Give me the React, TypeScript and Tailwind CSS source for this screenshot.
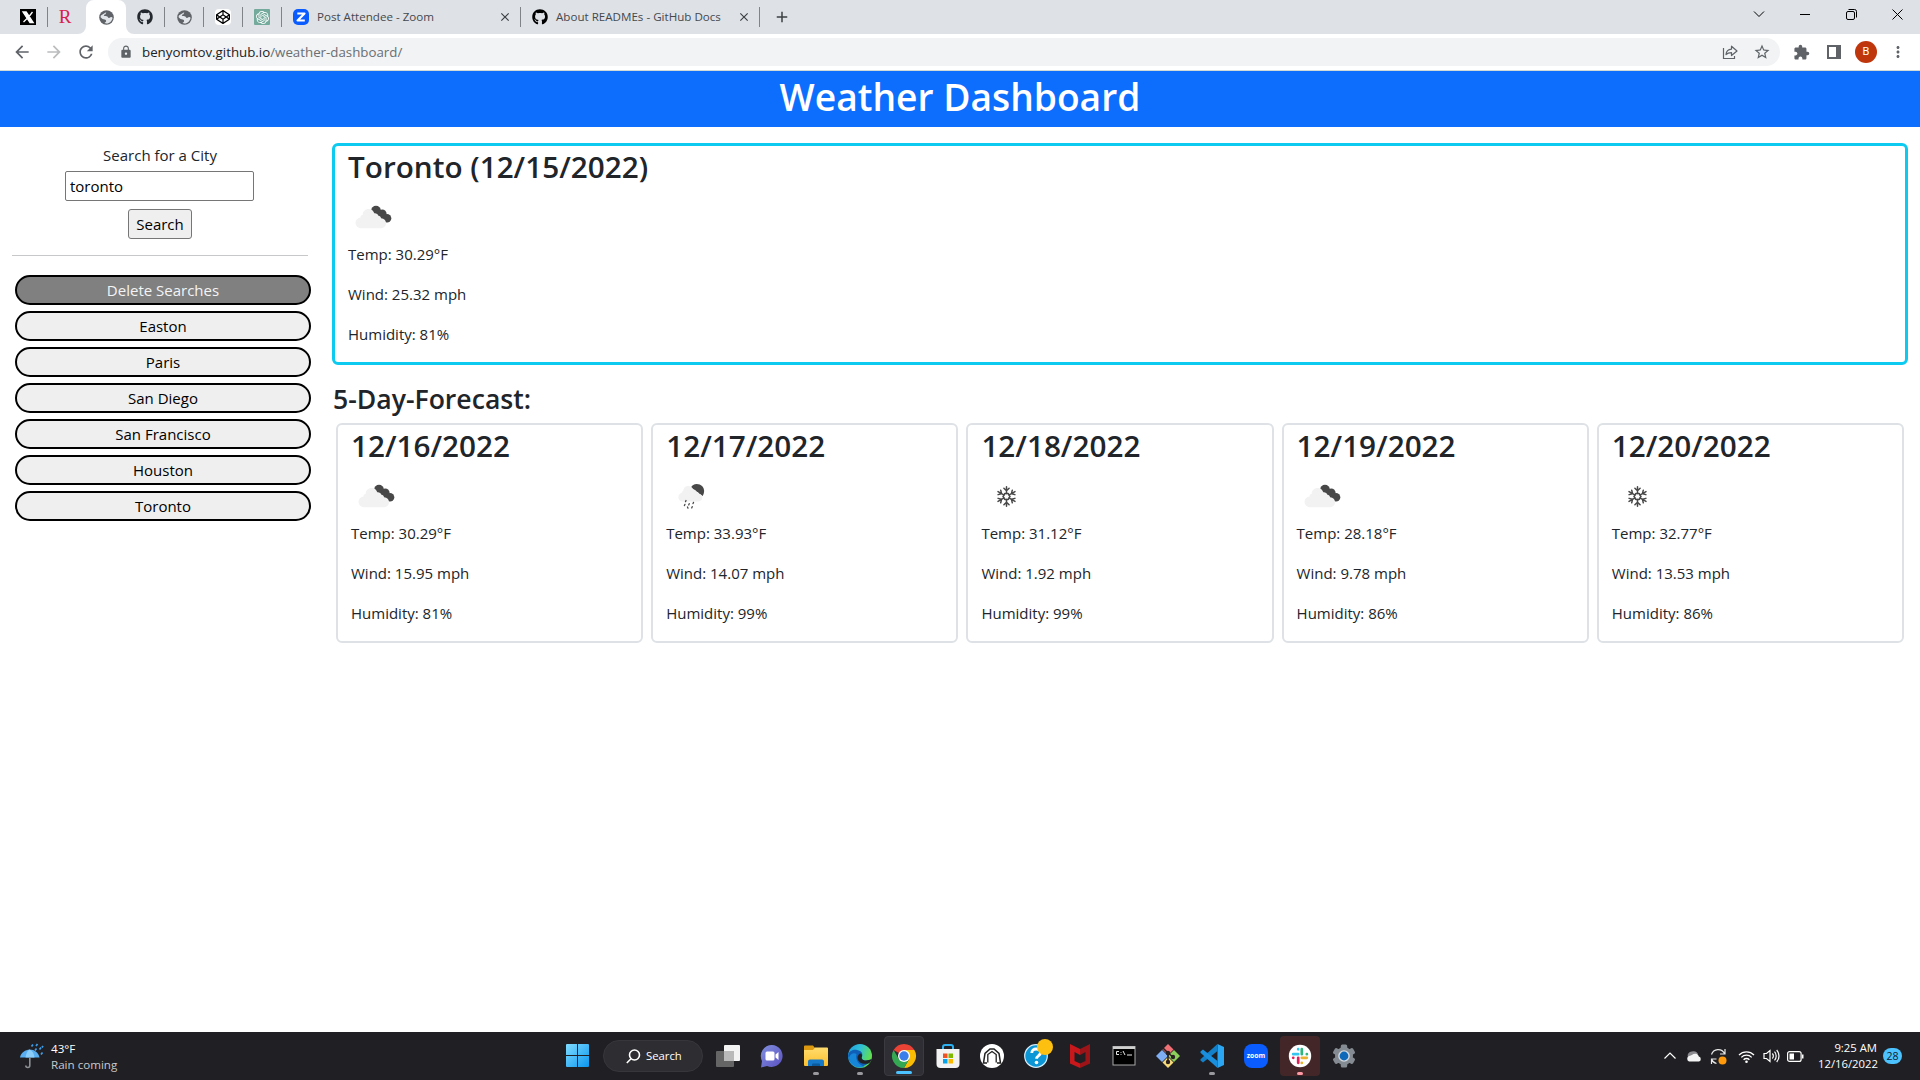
import React from "react";
import { FaGithub, FaCodepen } from "react-icons/fa";
import { SiOpenai } from "react-icons/si";
import {
  MdArrowBack,
  MdArrowForward,
  MdRefresh,
  MdLock,
  MdStarBorder,
  MdExtension,
  MdMoreVert,
  MdClose,
  MdAdd,
} from "react-icons/md";

type WeatherKind = "clouds" | "rain" | "snow";

interface Day {
  title: string;
  kind: WeatherKind;
  temp: string;
  wind: string;
  humidity: string;
}

const today: Day = {
  title: "Toronto (12/15/2022)",
  kind: "clouds",
  temp: "30.29",
  wind: "25.32",
  humidity: "81",
};

const forecast: Day[] = [
  { title: "12/16/2022", kind: "clouds", temp: "30.29", wind: "15.95", humidity: "81" },
  { title: "12/17/2022", kind: "rain", temp: "33.93", wind: "14.07", humidity: "99" },
  { title: "12/18/2022", kind: "snow", temp: "31.12", wind: "1.92", humidity: "99" },
  { title: "12/19/2022", kind: "clouds", temp: "28.18", wind: "9.78", humidity: "86" },
  { title: "12/20/2022", kind: "snow", temp: "32.77", wind: "13.53", humidity: "86" },
];

const cities = ["Easton", "Paris", "San Diego", "San Francisco", "Houston", "Toronto"];

function WeatherIcon({ kind }: { kind: WeatherKind }) {
  return (
    <svg className="-ml-px block size-[50px]" viewBox="0 0 50 50">
      {kind === "clouds" && (
        <>
          <g fill="#484848">
            <circle cx="29" cy="18.700" r="4.900" />
            <circle cx="35.300" cy="21.800" r="4.300" />
            <circle cx="40" cy="26.300" r="4.300" />
            <path d="M28 21l10-1 3 9-4 1-8-5z" />
          </g>
          <path
            d="M14 36.2a5.3 5.3 0 0 1-.4-10.6 2 2 0 0 1 2-2.6c.2-3.500 2.600-6 5.900-6 2.800 0 4.900 1.600 5.800 4.200 1.700-.3 3.700.8 4.100 2.600 1.500.1 2.400 1 2.700 2.500 3 .1 4.900 2.300 4.900 5 0 2.900-2 4.900-4.900 4.900z"
            fill="#f2f2f2"
          />
        </>
      )}
      {kind === "rain" && (
        <>
          <path d="M26 16.500c1-2.300 3-3.600 5.700-3.600 4.300 0 7.400 3 7.400 7.200 0 1.600-.5 3.300-1.500 4.800z" fill="#484848" />
          <path
            d="M17 30.500a4.400 4.400 0 0 1-.3-8.600c0-1 .6-1.700 1.400-1.900.2-3.100 2.400-5 5-5 2.500 0 4.300 1.400 5 3.500 1.600-.2 3 .8 3.400 2.300 1.500.1 2.300 1 2.500 2.300 2 .2 3.300 1.600 3.300 3.500 0 2.300-1.600 3.900-3.700 3.900z"
            fill="#f2f2f2"
          />
          <path
            d="M21 29.500l-.5 1.200M19.900 33.400l-.5 1.200M24.200 32.700l-.5 1.200M22.500 36l.5 1.200M28.500 31.400l-.5 1.200M27.200 35.700l-.5 1.200"
            stroke="#484848"
            strokeWidth="1.300"
            strokeLinecap="round"
          />
        </>
      )}
      {kind === "snow" && (
        <g stroke="#484848" strokeWidth="1.500" fill="none" strokeLinecap="round">
          {[0, 60, 120, 180, 240, 300].map((a) => (
            <path key={a} transform={`rotate(${a} 26.500 25.500)`} d="M26.500 22.800v-7.100M23.900 17.300l2.600 2.500 2.600-2.500M24.900 22.600h3.200" />
          ))}
        </g>
      )}
    </svg>
  );
}

function DayDetails({ day }: { day: Day }) {
  return (
    <>
      <h2 className="mb-1.5 h-[40.4px] text-[29.7px] leading-[42px] font-semibold whitespace-nowrap">{day.title}</h2>
      <WeatherIcon kind={day.kind} />
      <p className="mb-4">Temp: {day.temp}°F</p>
      <p className="mb-4">Wind: {day.wind} mph</p>
      <p className="mb-4">Humidity: {day.humidity}%</p>
    </>
  );
}

function Globe() {
  return (
    <svg className="size-[15px]" viewBox="0 0 15 15">
      <circle cx="7.500" cy="7.500" r="7.300" fill="#5f6368" />
      <path d="M8.300 1.600c-1.300.6-1.500 1.200-1.500 2.100 0 .8-1.900.5-2 1.600 0 1 1.600.8 2.800.9 1.500.1 1.200 1.700 2.400 1.700 1 0 1.100-1 2-1 .7 0 1 .5 1.600.5C13.400 10.700 10.700 13.400 7.500 13.400c-.9 0-1.400-.2-1.900-.5.4-.7 1.400-.8 1.500-1.700.1-1-.5-1.600-1.500-1.700-1.400-.1-2.600-.7-4-2.300 0-.6.100-1.200.3-1.700" fill="#e3e6ea" />
    </svg>
  );
}

function SmallTab({ children, divider = true }: { children: React.ReactNode; divider?: boolean }) {
  return (
    <div className="flex h-[34px] w-[39px] items-center">
      <div className="flex flex-1 justify-center">{children}</div>
      <div className={divider ? "h-5 w-px bg-[#808388]" : "h-5 w-px"} />
    </div>
  );
}

function WideTab({ icon, label }: { icon: React.ReactNode; label: string }) {
  return (
    <div className="flex h-[34px] w-[239px] items-center">
      <div className="ml-[10.5px] flex w-[17px] justify-center">{icon}</div>
      <span className="ml-[7.5px] flex-1 text-[11.6px] whitespace-nowrap text-[#45494d]">{label}</span>
      <MdClose className="mr-2 size-[14px] text-[#3c4043]" />
      <div className="h-5 w-px bg-[#808388]" />
    </div>
  );
}

function TabStrip() {
  return (
    <div className="flex h-[34px] bg-[#dee1e6] pl-[9px]">
      <SmallTab>
        <svg className="size-4" viewBox="0 0 16 16">
          <rect width="16" height="16" fill="#000" />
          <path d="M3 3h3.200l7 10.500H10zM12.500 3L9 7.500M7 9.500L3.500 13" fill="#fff" stroke="#fff" strokeWidth="1.300" />
        </svg>
      </SmallTab>
      <SmallTab divider={false}>
        <span className="-ml-1 font-['Liberation_Serif'] text-[19px] leading-4 text-[#d8204f]">R</span>
      </SmallTab>
      <div className="relative flex h-[34px] w-[39px] items-center justify-center">
        <svg className="absolute top-0 -left-[9px] h-[34px] w-14" viewBox="0 0 56 34">
          <path d="M0 34a8 8 0 0 0 8-8V8a8 8 0 0 1 8-8h24a8 8 0 0 1 8 8v18a8 8 0 0 0 8 8z" fill="#fff" />
        </svg>
        <div className="relative mr-px">
          <Globe />
        </div>
      </div>
      <SmallTab>
        <FaGithub className="size-4 text-[#24292f]" />
      </SmallTab>
      <SmallTab>
        <Globe />
      </SmallTab>
      <SmallTab>
        <div className="flex size-4 items-center justify-center rounded-sm bg-white">
          <FaCodepen className="size-[14px] text-black" />
        </div>
      </SmallTab>
      <SmallTab>
        <div className="flex size-4 items-center justify-center rounded-[1px] bg-[#74aa9c]">
          <SiOpenai className="size-[13px] text-white" />
        </div>
      </SmallTab>
      <WideTab
        label="Post Attendee - Zoom"
        icon={
          <svg className="size-4" viewBox="0 0 16 16">
            <rect width="16" height="16" rx="5" fill="#0b5cff" />
            <path d="M4.300 4.500h7.200L4.600 11.500h7.200" fill="none" stroke="#fff" strokeWidth="2.200" strokeLinejoin="round" />
          </svg>
        }
      />
      <WideTab label="About READMEs - GitHub Docs" icon={<FaGithub className="size-4 text-black" />} />
      <div className="flex w-[44px] items-center justify-center">
        <MdAdd className="size-[18px] text-[#3c4043]" />
      </div>
      <div className="ml-auto flex h-7 text-black">
        <div className="flex w-[46px] items-center justify-center">
          <svg className="size-3" viewBox="0 0 12 12" fill="none" stroke="currentColor">
            <path d="M1 3.500l5 5 5-5" />
          </svg>
        </div>
        <div className="flex w-[46px] items-center justify-center">
          <div className="h-px w-[10px] bg-black" />
        </div>
        <div className="flex w-[46px] items-center justify-center">
          <svg className="size-[11px]" viewBox="0 0 11 11" fill="none" stroke="currentColor">
            <rect x=".5" y="2.500" width="8" height="8" rx="1.500" />
            <path d="M2.500.5h6a2 2 0 0 1 2 2v6" />
          </svg>
        </div>
        <div className="flex w-[46px] items-center justify-center">
          <svg className="size-[11px]" viewBox="0 0 11 11" stroke="currentColor">
            <path d="M.5.5l10 10M10.500.5l-10 10" />
          </svg>
        </div>
      </div>
    </div>
  );
}

function Toolbar() {
  return (
    <div className="flex h-[37px] items-center border-b border-[#d3dbd8] bg-white text-[#5f6368]">
      <div className="flex h-9 w-[108px] items-center pl-3">
        <MdArrowBack className="size-5" />
        <MdArrowForward className="ml-3 size-5 text-[#babcbe]" />
        <MdRefresh className="ml-3 size-5" />
      </div>
      <div className="flex h-7 w-[1672px] items-center rounded-full bg-[#f1f3f4]">
        <MdLock className="ml-[11px] size-[14px]" />
        <span className="ml-[9px] flex-1 text-[13.3px] whitespace-nowrap text-[#6a6e73]">
          <span className="text-[#202124]">benyomtov.github.io</span>/weather-dashboard/
        </span>
        <svg className="size-4" viewBox="0 0 16 16" fill="none" stroke="currentColor" strokeWidth="1.200">
          <path d="M1.500 4v10.500h11V12" />
          <path d="M4 10.500c.3-3.500 2.300-5.200 5.500-5.400V2.200L15 7l-5.500 4.500V8.700C7 8.700 5.300 9.200 4 10.500z" strokeLinejoin="round" />
        </svg>
        <MdStarBorder className="mr-[9px] ml-[15px] size-[18px]" />
      </div>
      <div className="flex flex-1 items-center pl-[13px]">
        <MdExtension className="size-[17px]" />
        <svg className="ml-[17px] size-[14px]" viewBox="0 0 14 14">
          <path d="M0 0h14v14H0zM2 2v10h7V2z" fill="currentColor" fillRule="evenodd" />
        </svg>
        <div className="ml-[14px] flex size-[22px] items-center justify-center rounded-full bg-[#bf360c] font-['Roboto'] text-[11px] text-white">
          B
        </div>
        <MdMoreVert className="ml-3 size-[18px]" />
      </div>
    </div>
  );
}

function Sidebar() {
  return (
    <aside className="w-[332px] shrink-0">
      <div className="ml-3 flex w-[296px] flex-col items-center">
        <label htmlFor="city" className="mt-4">
          Search for a City
        </label>
        <input
          id="city"
          defaultValue="toronto"
          className="mt-[4px] -ml-px h-[30px] w-[189px] rounded-[2px] border border-[#767676] bg-white px-1 text-black outline-none"
        />
        <button className="mt-2 h-[30px] w-16 rounded-[3px] border border-[#767676] bg-[#efefef] text-black">Search</button>
        <div className="mt-4 h-px w-full bg-[#c7c8c9]" />
      </div>
      <div className="mt-[19px] ml-[15px] flex w-[296px] flex-col gap-1.5 text-black">
        <button className="h-[30px] rounded-full border-2 border-black bg-[#808080] leading-[26px] text-[#f4f4f4]">Delete Searches</button>
        {cities.map((c) => (
          <button key={c} className="h-[30px] rounded-full border-2 border-black bg-[#efefef] leading-[26px]">
            {c}
          </button>
        ))}
      </div>
    </aside>
  );
}

const taskIcons: { id: string; mark?: string; tile?: string; art: React.ReactNode }[] = [
  {
    id: "task-view",
    art: (
      <>
        <rect x="8" y="1" width="16" height="16" rx="1" fill="#f3f3f3" />
        <rect x="0" y="7" width="18" height="16" rx="1" fill="#777" fillOpacity=".8" />
        <path d="M8 7h10v10H8z" fill="#b9b9b9" />
      </>
    ),
  },
  {
    id: "chat",
    art: (
      <>
        <path d="M12 1a11 11 0 1 1-5 21L1 23.500 2 17A11 11 0 0 1 12 1z" fill="url(#chat)" />
        <rect x="5.500" y="7.500" width="9" height="9" rx="1.500" fill="#fff" />
        <path d="M15.500 10.500l3-2.500v8l-3-2.500z" fill="#fff" />
      </>
    ),
  },
  {
    id: "explorer",
    mark: "w-1.5 bg-[#9a9a9e]",
    art: (
      <>
        <path d="M0 2.500a1 1 0 0 1 1-1h8l2 2.500v5H0z" fill="#dd9a10" />
        <path d="M0 6h9l2-2.500h12a1 1 0 0 1 1 1V21a1 1 0 0 1-1 1H1a1 1 0 0 1-1-1z" fill="url(#folder)" />
        <path d="M4 22v-4.500a2 2 0 0 1 2-2h12a2 2 0 0 1 2 2V22z" fill="#1578c8" />
        <path d="M8 22v-1.500a1 1 0 0 1 1-1h6a1 1 0 0 1 1 1V22z" fill="#0b5a9c" />
      </>
    ),
  },
  {
    id: "edge",
    mark: "w-1.5 bg-[#9a9a9e]",
    art: (
      <>
        <circle cx="12" cy="12" r="12" fill="url(#edge)" />
        <path d="M0 12C1 6 6 5.500 9 6c5 .8 6 4 5 6.500-1 1.500 0 4 4 4 2 0 4-.6 5-1.200A12 12 0 0 1 0 12z" fill="#0f5fb8" />
        <path d="M8.500 10C7 15 10 21 16.500 22.500 9 26 1 20 1 13.500 3 9 6 8.500 8.500 10z" fill="#1686d9" />
        <path d="M14 12.500c-1 1.500 0 4 4 4 2 0 4-.6 5-1.200l1 .2-2.500 3.500c-5 2-11.500.5-12-5 0-2 1-3.500 2.500-4.500 1.500 0 2.500 1.500 2 3z" fill="#202127" />
      </>
    ),
  },
  {
    id: "chrome",
    mark: "w-4 bg-[#4cc2ff]",
    tile: "bg-[#2e2e34] border border-[#3a3a40]",
    art: (
      <>
        <path d="M12 12L1.600 6A12 12 0 0 1 22.400 6z" fill="#ea4335" />
        <path d="M12 12V6h10.400A12 12 0 0 1 12 24l5.200-9z" fill="#fbbc04" />
        <path d="M12 12l5.200 3L12 24A12 12 0 0 1 1.600 6l5.200 9z" fill="#34a853" />
        <circle cx="12" cy="12" r="6" fill="#fff" />
        <circle cx="12" cy="12" r="4.700" fill="#3b7de9" />
      </>
    ),
  },
  {
    id: "store",
    art: (
      <>
        <path d="M7 6V3a2 2 0 0 1 2-2h6a2 2 0 0 1 2 2v3" fill="none" stroke="#2db1f0" strokeWidth="2" />
        <path d="M.5 5h23v15a4 4 0 0 1-4 4h-15a4 4 0 0 1-4-4z" fill="#f3f3f3" />
        <path d="M7 9.500h4.500V14H7z" fill="#f05125" />
        <path d="M12.500 9.500H17V14h-4.500z" fill="#7eb900" />
        <path d="M7 15h4.500v4.500H7z" fill="#05a4ef" />
        <path d="M12.500 15H17v4.500h-4.500z" fill="#fdb900" />
      </>
    ),
  },
  {
    id: "predator",
    art: (
      <>
        <circle cx="12" cy="12" r="12" fill="#fff" />
        <path d="M7 19H3.500l1.500-9.500L10 5h4l5 4.500L20.500 19H17" fill="none" stroke="#222" strokeWidth="1.500" />
        <path d="M7.800 18.500V10.500L12 7.500l4.200 3v8" fill="none" stroke="#222" strokeWidth="1.300" />
      </>
    ),
  },
  {
    id: "help",
    art: (
      <>
        <circle cx="12" cy="12" r="11.300" fill="#0c96d6" stroke="#d6eefa" strokeWidth="1.200" />
        <path d="M7.800 9c0-2.600 1.800-4 4.400-4s4.400 1.500 4.400 3.600c0 3-4 3-4 6.200" fill="none" stroke="#fff" strokeWidth="2.800" />
        <circle cx="12.500" cy="18.500" r="1.800" fill="#fff" />
        <circle cx="21" cy="3" r="8" fill="#fdc010" />
      </>
    ),
  },
  {
    id: "shield",
    art: (
      <>
        <path d="M2 0l10 5v6L6.500 8v9l5.500 2.500V24L2 19.500z" fill="#c8181c" />
        <path d="M22 0L12 5v6l5.500-3v9L12 19.500V24l10-4.500z" fill="#9c1418" />
      </>
    ),
  },
  {
    id: "terminal",
    art: (
      <>
        <rect x="1" y="2.500" width="22" height="18.500" fill="#000" stroke="#a8a8a8" />
        <path d="M1 2.500h22V5H1z" fill="#d0d0d0" />
        <path d="M7 7.500H4.500v3H7M9 8v.8M9 10v.8M11 7l2 4M15 11h5" fill="none" stroke="#e8e8e8" />
      </>
    ),
  },
  {
    id: "git",
    art: (
      <>
        <path d="M12 0l5.500 5.500L12 11 6.500 5.500z" fill="#f07075" />
        <path d="M6 6l6 6-6 6-6-6z" fill="#80aef5" />
        <path d="M18 6l6 6-6 6-6-6z" fill="#8ccf5b" />
        <path d="M12 13l5.500 5.500L12 24l-5.500-5.500z" fill="#f8dc78" />
        <path d="M7 4l5 5v10M12 9l5 4" fill="none" stroke="#2b2020" strokeWidth="1.600" />
        <circle cx="12" cy="9" r="2.200" fill="#2b2020" />
        <circle cx="12" cy="18" r="2.200" fill="#2b2020" />
        <circle cx="17" cy="13" r="2.200" fill="#2b2020" />
      </>
    ),
  },
  {
    id: "code",
    mark: "w-1.5 bg-[#9a9a9e]",
    art: (
      <>
        <path d="M17.500 0L24 3v18l-6.500 3z" fill="#2aa6f2" />
        <path d="M17.500 0v7L3 18.500.5 16.500v-1.300z" fill="#1380c9" />
        <path d="M17.500 24v-7L3 5.500.5 7.500v1.300z" fill="#1a8fdd" />
      </>
    ),
  },
  {
    id: "zoom",
    art: (
      <>
        <rect width="24" height="24" rx="8" fill="#0b5cff" />
        <text x="12" y="14" textAnchor="middle" fontSize="6.800" fontWeight="700" fill="#fff">
          zoom
        </text>
      </>
    ),
  },
  {
    id: "slack",
    mark: "w-1.5 bg-[#ff99a4]",
    tile: "bg-[#432728]",
    art: (
      <>
        <circle cx="12" cy="12" r="11.200" fill="#fff" />
        <g strokeWidth="2.700" strokeLinecap="round">
          <path d="M10.200 5.200v.1M5.200 10.200h5" stroke="#36c5f0" />
          <path d="M13.800 5.200v5M18.800 10.200h.1" stroke="#2eb67d" />
          <path d="M13.800 13.800h5M13.800 18.800v.1" stroke="#ecb22e" />
          <path d="M10.200 13.800v5M5.200 13.800h.1" stroke="#e01e5a" />
        </g>
      </>
    ),
  },
  {
    id: "settings",
    art: (
      <>
        <g fill="#858b92">
          <circle cx="12" cy="12" r="9" />
          {[0, 60, 120].map((a) => (
            <rect key={a} x="8.800" y=".5" width="6.400" height="23" rx="1.500" transform={`rotate(${a} 12 12)`} />
          ))}
        </g>
        <circle cx="12" cy="12" r="5.800" fill="#d5dade" />
        <circle cx="12" cy="12" r="4.400" fill="#0f68b8" />
      </>
    ),
  },
];

function Taskbar() {
  return (
    <footer className="flex h-12 items-center bg-[#202024] text-white">
      <div className="flex w-[566px] items-center pl-[19px]">
        <svg className="size-[26px]" viewBox="0 0 26 26">
          <path d="M1 14.500C2 9 6.500 7 10.500 6.500c5 0 9 3 10 8z" fill="#58aef0" />
          <path d="M6.500 14.500c.5-4 2-6.500 4-8 3 1.500 4.500 4 5 8z" fill="#8accfa" />
          <path d="M10.800 14v8.500a2 2 0 0 1-4 0" fill="none" stroke="#8d8f94" strokeWidth="1.600" />
          <path d="M14 1.500l-1.500 2M18.500 1l-1.500 2M17.500 5.500l-1.500 2M22 4.500l-1.500 2M23.500 9.500l-1.500 2M24 3l-1 1.500" stroke="#3f9de8" strokeWidth="1.700" />
        </svg>
        <div className="ml-[6px] pt-[2px] text-[11.6px] leading-4">
          <div>43°F</div>
          <div className="text-[#c8c8ca]">Rain coming</div>
        </div>
      </div>
      <svg className="size-6" viewBox="0 0 24 24">
        <path d="M0 1a1 1 0 0 1 1-1h10v11H0zM12 0h10a1 1 0 0 1 1 1v10H12zM0 12h11v11H1a1 1 0 0 1-1-1zM12 12h11v10a1 1 0 0 1-1 1H12z" fill="url(#win)" />
        <defs>
          <linearGradient id="win" x1="0" y1="0" x2="1" y2="1">
            <stop stopColor="#7fdcff" />
            <stop offset="1" stopColor="#0b96f0" />
          </linearGradient>
          <linearGradient id="chat" x1="0" y1="0" x2="1" y2="1">
            <stop stopColor="#8190dc" />
            <stop offset="1" stopColor="#5a50c4" />
          </linearGradient>
          <linearGradient id="folder" x1="0" y1="0" x2="0" y2="1">
            <stop stopColor="#ffdc6e" />
            <stop offset="1" stopColor="#fcbf2e" />
          </linearGradient>
          <linearGradient id="edge" x1="0" y1="0" x2="1" y2=".4">
            <stop stopColor="#1f9de0" />
            <stop offset=".5" stopColor="#2fc0d8" />
            <stop offset="1" stopColor="#62df4c" />
          </linearGradient>
        </defs>
      </svg>
      <div className="ml-[13px] flex h-8 w-[100px] items-center rounded-full border border-[#36363b] bg-[#2d2d32] pl-[22px]">
        <svg className="size-[15px]" viewBox="0 0 15 15" fill="none" stroke="#fff" strokeWidth="1.600">
          <circle cx="8.500" cy="6" r="5" />
          <path d="M5 9.800L.8 14" />
        </svg>
        <span className="ml-[5px] text-[11.3px]">Search</span>
      </div>
      <div className="ml-[3px] flex">
        {taskIcons.map((t) => (
          <div key={t.id} className="flex h-12 w-11 items-center justify-center">
            <div className={`relative flex size-10 items-center justify-center rounded-[4px] ${t.tile ?? ""}`}>
              <svg className="size-6 overflow-visible" viewBox="0 0 24 24">
                {t.art}
              </svg>
              {t.mark && <div className={`absolute bottom-[1px] left-1/2 h-[3px] -translate-x-1/2 rounded-full ${t.mark}`} />}
            </div>
          </div>
        ))}
      </div>
      <div className="ml-auto flex items-center pr-[18px]">
        <svg className="h-3 w-3" viewBox="0 0 12 12" fill="none" stroke="#fff" strokeWidth="1.200">
          <path d="M.5 8.500L6 3l5.500 5.500" />
        </svg>
        <svg className="ml-[10px] h-4 w-4" viewBox="0 0 16 16">
          <path d="M2 9a4 4 0 0 1 4-5.500c3-1 5 .5 6 2.500l-4 5z" fill="#8c8c90" />
          <path d="M3 13.500a3 3 0 0 1 0-5.500c3-.5 4-2.500 6.500-2.200 2 0 3 1.700 3.300 2.700a2.600 2.600 0 0 1 .2 5z" fill="#f4f4f4" />
        </svg>
        <svg className="ml-[8px] size-[17px]" viewBox="0 0 17 17" fill="none" stroke="#e8e8e8" strokeWidth="1.200">
          <path d="M1.500 6.500a7 7 0 0 1 13-1M15 1v5h-5M6.500 15.500a7 7 0 0 1-5-4.500M1.500 16v-5h5" />
          <circle cx="12.500" cy="12.500" r="4" fill="#ff9a0c" stroke="none" />
        </svg>
        <svg className="ml-[11px] h-[15px] w-[17px]" viewBox="0 0 17 15" fill="none" stroke="#fff" strokeWidth="1.300">
          <path d="M1 6a10.500 10.500 0 0 1 15 0M3.300 8.400a7.300 7.300 0 0 1 10.400 0M5.600 10.700a4.100 4.100 0 0 1 5.800 0" />
          <circle cx="8.500" cy="12.800" r="1.300" fill="#fff" stroke="none" />
        </svg>
        <svg className="ml-[8px] h-4 w-[17px]" viewBox="0 0 17 16" fill="none" stroke="#fff" strokeWidth="1.200">
          <path d="M1 5.500h2.500L7 2.500v11l-3.500-3H1zM9.300 5.500a3.500 3.500 0 0 1 0 5M11.500 3.700a6.300 6.300 0 0 1 0 8.600M13.700 2a9 9 0 0 1 0 12" />
        </svg>
        <svg className="ml-[7px] h-[11px] w-[17px]" viewBox="0 0 17 11" fill="none" stroke="#fff" strokeWidth="1.200">
          <rect x=".6" y=".6" width="13.500" height="9.800" rx="2" />
          <path d="M2.500 2.500H7v6H2.500z" fill="#fff" stroke="none" />
          <path d="M15.700 3.500v4" strokeWidth="1.600" />
        </svg>
        <div className="ml-[14px] w-[59px] text-right text-[11.3px] leading-4 whitespace-nowrap">
          <div>9:25 AM</div>
          <div>12/16/2022</div>
        </div>
        <div className="ml-[6px] flex h-4 w-[19px] items-center justify-center rounded-full bg-[#4cc2ff] text-[10.5px] text-[#10202c]">28</div>
      </div>
    </footer>
  );
}

export default function App() {
  return (
    <div className="flex h-[1080px] w-[1920px] flex-col overflow-hidden bg-white font-['Open_Sans',sans-serif] text-[15px] leading-6 text-[#212529]">
      <TabStrip />
      <Toolbar />
      <header className="h-14 bg-[#0d6efd] text-center text-[37.2px] leading-[52px] font-semibold text-white">Weather Dashboard</header>
      <div className="flex flex-1">
        <Sidebar />
        <main className="mt-4 w-[1576px]">
          <section className="h-[222.4px] rounded-md border-3 border-[#0dcaf0] px-[13px]">
            <DayDetails day={today} />
          </section>
          <h3 className="mt-4 mb-1 pl-px text-[26.6px] leading-[37.6px] font-semibold">5-Day-Forecast:</h3>
          <div className="grid grid-cols-5">
            {forecast.map((d) => (
              <section key={d.title} className="mx-1 h-[220.4px] rounded-md border-2 border-[#dee2e6] px-[13px]">
                <DayDetails day={d} />
              </section>
            ))}
          </div>
        </main>
      </div>
      <Taskbar />
    </div>
  );
}
